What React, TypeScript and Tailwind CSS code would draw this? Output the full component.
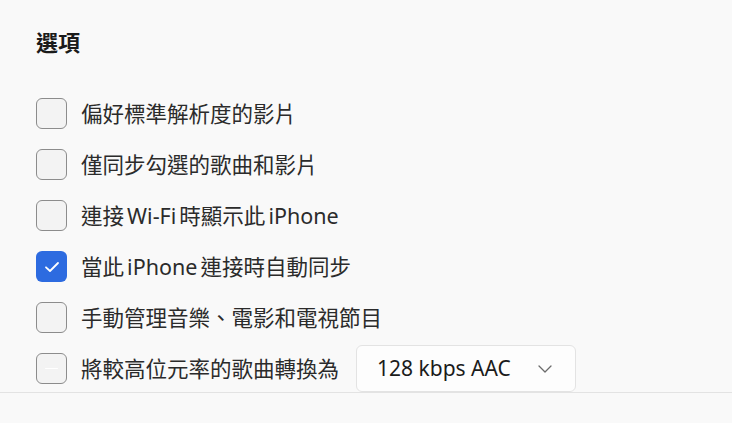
import React, { useState } from 'react';

const font = { fontFamily: '"Noto Sans", "Noto Sans CJK TC", sans-serif' };

type Opt = { label: string; checked?: boolean; faded?: boolean; select?: boolean };

const options: Opt[] = [
  { label: '偏好標準解析度的影片' },
  { label: '僅同步勾選的歌曲和影片' },
  { label: '連接 Wi-Fi 時顯示此 iPhone' },
  { label: '當此 iPhone 連接時自動同步', checked: true },
  { label: '手動管理音樂、電影和電視節目' },
  { label: '將較高位元率的歌曲轉換為', faded: true, select: true },
];

const Checkbox = ({ checked, faded, onClick }: { checked: boolean; faded?: boolean; onClick: () => void }) => (
  <button
    onClick={onClick}
    className={
      checked
        ? 'flex h-[31px] w-[31px] shrink-0 items-center justify-center rounded-[6px] bg-[#2d6be0]'
        : 'flex h-[31px] w-[31px] shrink-0 items-center justify-center rounded-[6px] border-[1.5px] border-[#8c8c8c] bg-[#f3f3f3]'
    }
  >
    {checked && (
      <svg width="16" height="12" viewBox="0 0 16 12" fill="none">
        <path d="M2 6.3 L6 10 L14 2" stroke="white" strokeWidth="1.8" strokeLinecap="round" strokeLinejoin="round" />
      </svg>
    )}
    {!checked && faded && <span className="h-[1.5px] w-[13px] rounded bg-white" />}
  </button>
);

const App = () => {
  const [state, setState] = useState(options.map((o) => !!o.checked));

  const toggle = (i: number) => {
    const next = [...state];
    next[i] = !next[i];
    setState(next);
  };

  return (
    <div className="flex h-[423px] w-[732px] flex-col bg-[#f9f9f9]" style={font}>
      <div className="h-[392px] overflow-hidden pl-9 pt-[30px]">
        <h2 className="text-[22px] font-bold leading-[24px] text-[#1b1b1b]">選項</h2>
        <div className="mt-[34px] flex flex-col">
          {options.map((o, i) => (
            <div key={o.label} className="flex h-[51px] items-center gap-[14px]">
              <Checkbox checked={state[i]} faded={o.faded} onClick={() => toggle(i)} />
              <span className="text-[21.5px] leading-none text-[#2b2b2b] [word-spacing:-2.5px]">{o.label}</span>
              {o.select && (
                <div className="ml-[3px] flex h-[47px] w-[220px] items-center justify-between rounded-[6px] border border-[#e3e3e3] bg-[#fdfdfd] pl-[20px] pr-[23px]">
                  <span className="text-[21px] text-[#1b1b1b]">128 kbps AAC</span>
                  <svg width="14" height="8" viewBox="0 0 14 8" fill="none">
                    <path d="M1 1 L7 7 L13 1" stroke="#6b6b6b" strokeWidth="1.3" strokeLinecap="round" strokeLinejoin="round" />
                  </svg>
                </div>
              )}
            </div>
          ))}
        </div>
      </div>
      <div className="flex-1 border-t border-[#e3e3e3] bg-[#f9f9f9]" />
    </div>
  );
};

export default App;
